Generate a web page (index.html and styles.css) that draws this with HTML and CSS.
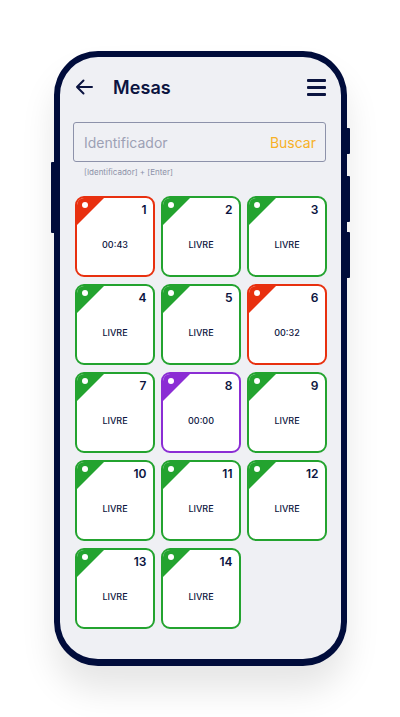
FILE: index.html
```html
<!DOCTYPE html>
<html lang="pt">
<head>
<meta charset="utf-8">
<title>Mesas</title>
<link rel="stylesheet" href="styles.css">
</head>
<body>
<div class="phone">
  <span class="btn btn-left"></span>
  <span class="btn btn-r1"></span>
  <span class="btn btn-r2"></span>
  <span class="btn btn-r3"></span>
  <div class="screen">
    <header class="header">
      <svg class="back" width="18" height="16" viewBox="0 0 18 16"><path d="M17 8H2M8.5 1.5L2 8l6.5 6.5" fill="none" stroke="#0b1440" stroke-width="2" stroke-linecap="round" stroke-linejoin="round"/></svg>
      <h1 class="title">Mesas</h1>
      <div class="menu"><span></span><span></span><span></span></div>
    </header>
    <div class="search">
      <span class="placeholder">Identificador</span>
      <span class="buscar">Buscar</span>
    </div>
    <div class="hint">[Identificador] + [Enter]</div>
    <div class="grid">
      <div class="card red"><span class="dot"></span><span class="num">1</span><span class="label">00:43</span></div>
      <div class="card green"><span class="dot"></span><span class="num">2</span><span class="label">LIVRE</span></div>
      <div class="card green"><span class="dot"></span><span class="num">3</span><span class="label">LIVRE</span></div>
      <div class="card green"><span class="dot"></span><span class="num">4</span><span class="label">LIVRE</span></div>
      <div class="card green"><span class="dot"></span><span class="num">5</span><span class="label">LIVRE</span></div>
      <div class="card red"><span class="dot"></span><span class="num">6</span><span class="label">00:32</span></div>
      <div class="card green"><span class="dot"></span><span class="num">7</span><span class="label">LIVRE</span></div>
      <div class="card purple"><span class="dot"></span><span class="num">8</span><span class="label">00:00</span></div>
      <div class="card green"><span class="dot"></span><span class="num">9</span><span class="label">LIVRE</span></div>
      <div class="card green"><span class="dot"></span><span class="num">10</span><span class="label">LIVRE</span></div>
      <div class="card green"><span class="dot"></span><span class="num">11</span><span class="label">LIVRE</span></div>
      <div class="card green"><span class="dot"></span><span class="num">12</span><span class="label">LIVRE</span></div>
      <div class="card green"><span class="dot"></span><span class="num">13</span><span class="label">LIVRE</span></div>
      <div class="card green"><span class="dot"></span><span class="num">14</span><span class="label">LIVRE</span></div>
    </div>
  </div>
</div>
</body>
</html>
```
FILE: styles.css
```css
* { box-sizing: border-box; }
html, body { margin: 0; padding: 0; background: #ffffff; }
body {
  font-family: Inter, "Noto Sans", sans-serif;
  color: #0b1440;
  width: 400px;
  height: 717px;
  overflow: hidden;
}
.phone {
  position: relative;
  margin: 51px 0 0 54px;
  width: 293px;
  height: 615px;
  border: 6px solid #000c3b;
  border-bottom-width: 7px;
  border-radius: 44px;
  background: #eff0f4;
  box-shadow: 0 24px 34px rgba(0, 0, 0, 0.10);
}
.btn {
  position: absolute;
  background: #000c3b;
  width: 4px;
  border-radius: 1px;
}
.btn-left { left: -9px; top: 105px; height: 71px; }
.btn-r1 { right: -9px; top: 71px; height: 26px; }
.btn-r2 { right: -9px; top: 119px; height: 46px; }
.btn-r3 { right: -9px; top: 175px; height: 46px; }
.screen {
  padding: 14px 0 0 13px;
}
.header {
  display: flex;
  align-items: center;
  height: 32px;
  padding-left: 2px;
}
.back { display: block; }
.title {
  margin: 0 0 0 20px;
  font-size: 18px;
  font-weight: 600;
  letter-spacing: 0.1px;
  color: #0b1440;
  flex: 1;
}
.menu {
  display: flex;
  flex-direction: column;
  gap: 4px;
  width: 19px;
  margin-right: 15px;
}
.menu span {
  display: block;
  height: 3px;
  border-radius: 1px;
  background: #0b1440;
}
.search {
  margin-top: 19px;
  width: 253px;
  height: 40px;
  border: 1px solid #8d92aa;
  border-radius: 3px;
  display: flex;
  align-items: center;
  justify-content: space-between;
  padding: 0 9px 0 10px;
  font-size: 14px;
}
.placeholder { color: #9da1b4; font-weight: 400; }
.buscar { color: #f7b027; font-weight: 400; }
.hint {
  margin: 4px 0 0 11px;
  font-size: 8px;
  color: #8d92a8;
  line-height: 12px;
}
.grid {
  margin: 18px 0 0 2px;
  display: grid;
  grid-template-columns: repeat(3, 80px);
  grid-auto-rows: 81px;
  column-gap: 6px;
  row-gap: 7px;
}
.card {
  position: relative;
  background: #ffffff;
  border: 2px solid #23a32f;
  border-radius: 9px;
  overflow: hidden;
  display: flex;
  flex-direction: column;
}
.card::before {
  content: "";
  position: absolute;
  left: 0;
  top: 0;
  width: 27px;
  height: 27px;
  background: #23a32f;
  clip-path: polygon(0 0, 100% 0, 0 100%);
}
.card.red { border-color: #e8300f; }
.card.red::before { background: #e8300f; }
.card.purple { border-color: #8b2dd4; }
.card.purple::before { background: #8b2dd4; }
.dot {
  position: absolute;
  left: 4.5px;
  top: 4px;
  width: 6px;
  height: 6px;
  border-radius: 50%;
  background: #ffffff;
}
.num {
  align-self: flex-end;
  padding: 3.5px 6.5px 0 0;
  font-size: 12px;
  line-height: 16px;
  font-weight: 600;
  color: #0b1440;
}
.label {
  flex: 1;
  display: flex;
  align-items: center;
  justify-content: center;
  padding-bottom: 4px;
  font-size: 9px;
  font-weight: 500;
  color: #0b1440;
}
```
